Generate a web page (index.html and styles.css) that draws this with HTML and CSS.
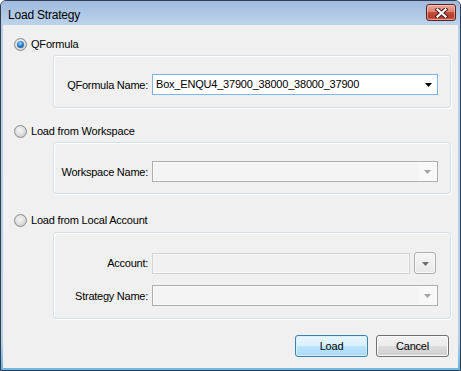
FILE: index.html
```html
<!DOCTYPE html>
<html>
<head>
<meta charset="utf-8">
<title>Load Strategy</title>
<link rel="stylesheet" href="styles.css">
</head>
<body>
<div class="window">
  <div class="titlebar">
    <span class="title">Load Strategy</span>
    <button class="close" aria-label="Close">
      <svg width="13" height="10" viewBox="0 0 13 10">
        <path d="M2.5 1.5 L10.5 8.5 M10.5 1.5 L2.5 8.5" stroke="#4a1c1c" stroke-width="4.2" stroke-linecap="square" fill="none"/>
        <path d="M2.5 1.5 L10.5 8.5 M10.5 1.5 L2.5 8.5" stroke="#ffffff" stroke-width="2.2" stroke-linecap="square" fill="none"/>
      </svg>
    </button>
  </div>
  <div class="client">
    <div class="option opt1"><span class="radio checked"></span><span class="label">QFormula</span></div>
    <div class="group g1">
      <div class="row">
        <span class="field-label">QFormula Name:</span>
        <div class="combo active">
          <span class="combo-text">Box_ENQU4_37900_38000_38000_37900</span>
          <span class="combo-arrow"><svg width="7" height="4" viewBox="0 0 7 4"><path d="M0 0H7L3.5 4Z" fill="#000"/></svg></span>
        </div>
      </div>
    </div>

    <div class="option opt2"><span class="radio"></span><span class="label">Load from Workspace</span></div>
    <div class="group g2">
      <div class="row">
        <span class="field-label">Workspace Name:</span>
        <div class="combo disabled">
          <span class="combo-text"></span>
          <span class="combo-arrow"><svg width="7" height="4" viewBox="0 0 7 4"><path d="M0 0H7L3.5 4Z" fill="#a2a2a2"/></svg></span>
        </div>
      </div>
    </div>

    <div class="option opt3"><span class="radio"></span><span class="label">Load from Local Account</span></div>
    <div class="group g3">
      <div class="row">
        <span class="field-label">Account:</span>
        <div class="account-cell">
          <div class="textbox disabled"></div>
          <div class="dd-button"><svg width="7" height="4" viewBox="0 0 7 4"><path d="M0 0H7L3.5 4Z" fill="#6a6a6a"/></svg></div>
        </div>
      </div>
      <div class="row row2">
        <span class="field-label">Strategy Name:</span>
        <div class="combo disabled">
          <span class="combo-text"></span>
          <span class="combo-arrow"><svg width="7" height="4" viewBox="0 0 7 4"><path d="M0 0H7L3.5 4Z" fill="#a2a2a2"/></svg></span>
        </div>
      </div>
    </div>

    <div class="actions">
      <button class="btn default">Load</button>
      <button class="btn">Cancel</button>
    </div>
  </div>
</div>
</body>
</html>
```

FILE: styles.css
```css
* { box-sizing: border-box; }

html, body {
  margin: 0;
  padding: 0;
  background: #ffffff;
}

body {
  font-family: "Liberation Sans", Arial, sans-serif;
  font-size: 11px;
  color: #000;
}

.window {
  width: 461px;
  height: 371px;
  border: 1px solid #2f3d50;
  border-radius: 6px 6px 0 0;
  background: linear-gradient(to bottom, #a9c3e2 0px, #bcd1ea 30px, #b7cde8 340px, #6fb6e4 366px, #6fb6e4 370px);
  display: flex;
  flex-direction: column;
  overflow: hidden;
}

.titlebar {
  height: 24px;
  flex: none;
  display: flex;
  align-items: flex-start;
  justify-content: space-between;
  padding: 0 4px 0 7px;
  background: linear-gradient(to bottom, #9fbadb 0%, #acc6e4 45%, #bdd3ec 100%);
}

.title {
  font-size: 12px;
  letter-spacing: -0.2px;
  line-height: 14px;
  margin-top: 7px;
  color: #000;
}

.close {
  width: 30px;
  height: 17px;
  margin-top: 3px;
  padding: 0;
  border: 1px solid #5b2222;
  border-radius: 3px;
  background: linear-gradient(to bottom, #e9a99b 0%, #d98170 45%, #c4503d 50%, #b83b2a 80%, #cf6b55 100%);
  box-shadow: inset 0 0 0 1px rgba(255, 220, 210, 0.5);
  display: flex;
  align-items: center;
  justify-content: center;
}

.close svg { display: block; }

.client {
  flex: 1;
  margin: 0 2px 2px 2px;
  background: #f0f0f0;
  display: flex;
  flex-direction: column;
  padding-left: 11px;
}

.option {
  display: flex;
  align-items: center;
  height: 13px;
  gap: 4px;
}

.opt1 { margin-top: 13px; }
.opt2 { margin-top: 17px; }
.opt3 { margin-top: 20px; }

.label {
  letter-spacing: -0.2px;
  line-height: 13px;
}

.radio {
  width: 13px;
  height: 13px;
  flex: none;
  border-radius: 50%;
  border: 1px solid #8a8b8b;
  background: radial-gradient(circle at 45% 40%, #f6f6f6 0, #e4e4e4 40%, #d2d2d2 70%, #f2f2f2 100%);
  display: flex;
  align-items: center;
  justify-content: center;
}

.radio.checked::after {
  content: "";
  width: 7px;
  height: 7px;
  border-radius: 50%;
  background: radial-gradient(circle at 45% 35%, #9fd8f8 0, #3a8bd2 40%, #1a5499 80%, #103a70 100%);
}

.group {
  margin-left: 39px;
  margin-right: 7px;
  margin-top: 4px;
  border: 1px solid #d5dfe5;
  border-radius: 3px;
  box-shadow: 1px 1px 0 #ffffff, inset 1px 1px 0 #ffffff;
  padding-right: 12px;
}

.g1 { height: 53px; padding-top: 18px; }
.g2 { height: 52px; padding-top: 18px; }
.g3 { height: 87px; padding-top: 19px; margin-top: 5px; }

.row {
  display: grid;
  grid-template-columns: 94px 1fr;
  column-gap: 4px;
  align-items: center;
  height: 21px;
}

.row2 { margin-top: 12px; }

.field-label {
  text-align: right;
  letter-spacing: -0.25px;
  white-space: nowrap;
}

.combo {
  height: 21px;
  display: flex;
  align-items: stretch;
  border: 1px solid #7eb4ea;
  background: #fff;
}

.combo-text {
  flex: 1;
  padding-left: 3px;
  line-height: 19px;
  letter-spacing: -0.2px;
  white-space: nowrap;
  overflow: hidden;
}

.combo-arrow {
  width: 17px;
  flex: none;
  display: flex;
  align-items: center;
  justify-content: center;
}

.combo.active .combo-arrow { padding-top: 1px; }

.combo.disabled {
  border-color: #adadad;
  background: #f4f4f4;
  box-shadow: inset 0 0 0 1px #fbfbfb;
}

.combo.disabled .combo-arrow {
  background: #f8f8f8;
  margin: 1px 1px 1px 0;
}

.account-cell {
  display: flex;
  align-items: center;
  gap: 4px;
  padding-right: 2px;
}

.textbox {
  flex: 1;
  height: 21px;
}

.textbox.disabled {
  border: 1px solid #d2d2d2;
  background: #f0f0f0;
  box-shadow: inset 0 0 0 1px #f7f7f7;
}

.dd-button {
  width: 22px;
  height: 22px;
  flex: none;
  border: 1px solid #adadad;
  border-radius: 3px;
  background: linear-gradient(to bottom, #f4f4f4 0%, #f0f0f0 50%, #e8e8e8 100%);
  box-shadow: inset 0 0 0 1px #fafafa;
  display: flex;
  align-items: center;
  justify-content: center;
  padding-top: 1px;
}

.actions {
  display: flex;
  justify-content: flex-end;
  gap: 8px;
  margin-top: 16px;
  padding-right: 9px;
}

.btn {
  width: 73px;
  height: 22px;
  padding: 0;
  font-family: "Liberation Sans", Arial, sans-serif;
  font-size: 11px;
  letter-spacing: -0.2px;
  color: #000;
  border: 1px solid #707070;
  border-radius: 3px;
  background: linear-gradient(to bottom, #f2f2f2 0%, #ebebeb 50%, #dddddd 50%, #cfcfcf 100%);
  box-shadow: inset 0 0 0 1px #fbfbfb;
}

.btn.default {
  border-color: #3c7fb1;
  background: linear-gradient(to bottom, #eaf6fd 0%, #d9f0fc 50%, #bee6fd 50%, #a7d9f5 100%);
  box-shadow: inset 0 0 0 1px #d6f0fc;
}
```
